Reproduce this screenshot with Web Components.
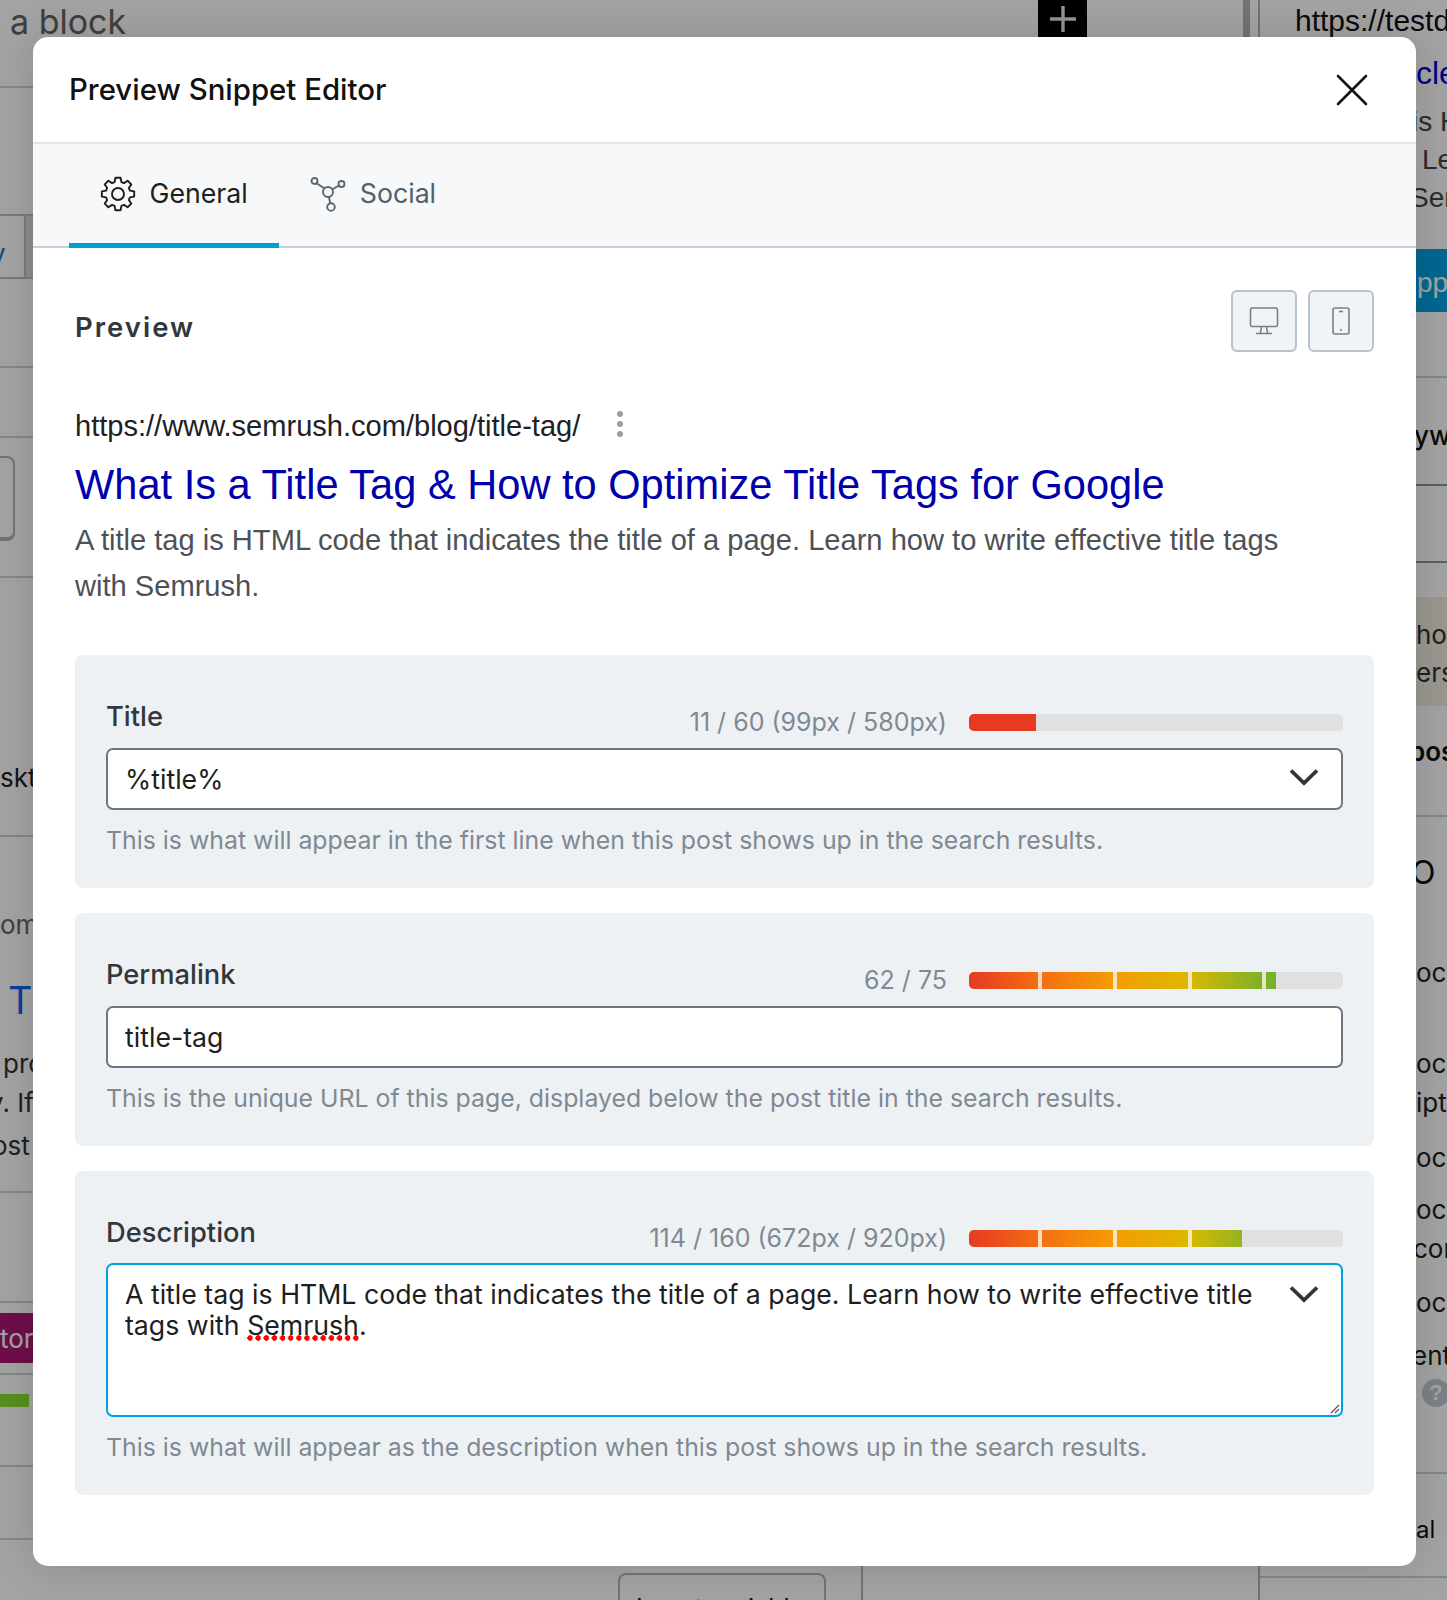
<!DOCTYPE html>
<html lang="en">
<head>
<meta charset="utf-8">
<title>Preview Snippet Editor</title>
<style>
  html, body { margin: 0; padding: 0; }
  body { font-family: Inter, "Noto Sans", sans-serif; }
</style>
</head>
<body>
<app-screen>
  <bg-col slot="left" style="--w:861px;--f:26px;--c:#1e1e1e;--ff:Inter,sans-serif">
    <bg-row style="--h:88px;--lh:44px;--fs:34px;--col:#636363;--pl:10px;--line:1">a block</bg-row>
    <bg-row style="--h:126px"></bg-row>
    <bg-tab>v</bg-tab>
    <bg-row style="--h:89px;--line:1"></bg-row>
    <bg-row style="--h:70px;--line:1"></bg-row>
    <bg-row style="--h:18px"></bg-row>
    <bg-box></bg-box>
    <bg-row style="--h:37px;--line:1"></bg-row>
    <bg-row style="--h:259px;--lh:400px;--line:1">skt</bg-row>
    <bg-row style="--h:120px;--lh:176px;--col:#666">om</bg-row>
    <bg-row style="--h:86px;--lh:86px;--fs:38px;--col:#1064f3;--pl:8px">T</bg-row>
    <bg-row style="--h:36px;--lh:42px;--pl:3px;--col:#333">pro</bg-row>
    <bg-row style="--h:37px;--lh:47px;--ti:-11px;--col:#333">y. If</bg-row>
    <bg-row style="--h:77px;--lh:60px;--ti:-8px;--col:#333;--line:1">ost</bg-row>
    <bg-row style="--h:110px;--line:1"></bg-row>
    <bg-row style="--h:10px"></bg-row>
    <bg-fill style="--h:50px;--w:33px;--bg:#ad1672;--lh:52px;--col:#fff">tor</bg-fill>
    <bg-row style="--h:12px;--line:1"></bg-row>
    <bg-row style="--h:19px"></bg-row>
    <bg-fill style="--h:13px;--w:29px;--bg:#86e22e"></bg-fill>
    <bg-row style="--h:60px;--line:1"></bg-row>
    <bg-row style="--h:73px;--line:1"></bg-row>
    <bg-row style="--h:33px"></bg-row>
    <bg-variable>Insert variable</bg-variable>
  </bg-col>
  <bg-mid slot="mid"></bg-mid>
  <bg-col slot="right" style="--w:187px;--ff:&quot;Liberation Sans&quot;,sans-serif">
    <bg-row style="--h:40px;--lh:41px;--pl:35px;--fs:30px;--col:#111">https://testd</bg-row>
    <bg-row style="--h:13px"></bg-row>
    <bg-row style="--h:40px;--lh:40px;--pl:156px;--fs:32px;--col:#0000cc">cle</bg-row>
    <bg-row style="--h:10px"></bg-row>
    <bg-row style="--h:38px;--lh:38px;--pl:152px;--fs:28px;--col:#444">is H</bg-row>
    <bg-row style="--h:38px;--lh:38px;--pl:162px;--fs:28px;--col:#444">Le</bg-row>
    <bg-row style="--h:38px;--lh:38px;--pl:150px;--fs:28px;--col:#444">Ser</bg-row>
    <bg-row style="--h:32px"></bg-row>
    <bg-fill style="--h:63px;--w:187px;--bg:#05a2e3;--lh:67px;--fs:28px;--col:#fff;--pl:157px">pp</bg-fill>
    <bg-row style="--h:66px;--line:1"></bg-row>
    <bg-row style="--h:108px;--lh:116px;--pl:154px;--col:#111;--ff2:Inter,sans-serif;--fw:500;--line:2">yw</bg-row>
    <bg-row style="--h:77px;--line:2"></bg-row>
    <bg-row style="--h:34px"></bg-row>
    <bg-fill style="--h:109px;--w:187px;--bg:#f2ede2;--lh:38px;--col:#2c3338;--pl:156px;--pt:19px;--ff2:Inter,sans-serif">hon<br>ers</bg-fill>
    <bg-row style="--h:111px;--lh:92px;--pl:152px;--ti:-3px;--col:#111;--fw:600;--ff2:Inter,sans-serif;--line:1">pos</bg-row>
    <bg-row style="--h:110px;--lh:112px;--pl:151px;--fs:32px;--col:#111;--ff2:Inter,sans-serif">O</bg-row>
    <bg-row style="--h:92px;--lh:92px;--pl:156px;--col:#222;--ff2:Inter,sans-serif">oc</bg-row>
    <bg-row style="--h:26px"></bg-row>
    <bg-row style="--h:38px;--lh:38px;--pl:156px;--col:#222;--ff2:Inter,sans-serif">oc</bg-row>
    <bg-row style="--h:38px;--lh:40px;--pl:156px;--col:#222;--ff2:Inter,sans-serif">ipt</bg-row>
    <bg-row style="--h:74px;--lh:74px;--pl:156px;--col:#222;--ff2:Inter,sans-serif">oc</bg-row>
    <bg-row style="--h:30px;--lh:30px;--pl:156px;--col:#222;--ff2:Inter,sans-serif">oc</bg-row>
    <bg-row style="--h:48px;--lh:48px;--pl:153px;--col:#222;--ff2:Inter,sans-serif">con</bg-row>
    <bg-row style="--h:60px;--lh:60px;--pl:156px;--col:#222;--ff2:Inter,sans-serif">oc</bg-row>
    <bg-row style="--h:46px;--lh:46px;--pl:152px;--col:#222;--ff2:Inter,sans-serif">ent</bg-row>
    <bg-help></bg-help>
    <bg-row style="--h:66px;--line:1"></bg-row>
    <bg-row style="--h:104px;--lh:112px;--pl:156px;--fs:24px;--col:#111;--ff2:Inter,sans-serif;--line:1">al</bg-row>
  </bg-col>

  <snippet-modal slot="modal" heading="Preview Snippet Editor">
    <modal-tabs slot="tabs">
      <tab-item active icon="gear">General</tab-item>
      <tab-item icon="social">Social</tab-item>
    </modal-tabs>

    <preview-head>Preview</preview-head>
    <serp-preview>
      <span slot="url">https://www.semrush.com/blog/title-tag/</span>
      <span slot="title">What Is a Title Tag &amp; How to Optimize Title Tags for Google</span>
      A title tag is HTML code that indicates the title of a page. Learn how to write effective title tags with Semrush.
    </serp-preview>

    <field-card label="Title" count="11 / 60 (99px / 580px)" fill="67" solid
      hint="This is what will appear in the first line when this post shows up in the search results." chevron>%title%</field-card>
    <field-card label="Permalink" count="62 / 75" fill="307"
      hint="This is the unique URL of this page, displayed below the post title in the search results.">title-tag</field-card>
    <field-card label="Description" count="114 / 160 (672px / 920px)" fill="273" multiline chevron
      hint="This is what will appear as the description when this post shows up in the search results.">A title tag is HTML code that indicates the title of a page. Learn how to write effective title tags with <spell-error>Semrush</spell-error>.</field-card>
  </snippet-modal>
</app-screen>

<script>
function define(name, html, extra) {
  const tpl = document.createElement('template');
  tpl.innerHTML = html;
  customElements.define(name, class extends HTMLElement {
    constructor() {
      super();
      this.attachShadow({ mode: 'open' }).appendChild(tpl.content.cloneNode(true));
    }
    connectedCallback() { if (extra) extra(this, this.shadowRoot); }
  });
}

define('app-screen', `
<style>
  :host { display:block; position:relative; width:1447px; height:1600px; overflow:hidden; background:#fff; }
  .page { display:flex; height:1600px; }
  .overlay { position:absolute; inset:0; background:rgba(0,0,0,.36); padding:37px 31px 34px 33px; box-sizing:border-box; display:flex; }
</style>
<div class="page"><slot name="left"></slot><slot name="mid"></slot><slot name="right"></slot></div>
<div class="overlay"><slot name="modal"></slot></div>`);

define('bg-col', `
<style>
  :host { display:block; width:var(--w); flex:none; height:1600px; font-family:var(--ff); overflow:hidden; box-sizing:border-box; }
</style><slot></slot>`);

define('bg-row', `
<style>
  :host { display:block; box-sizing:border-box; height:var(--h); line-height:var(--lh,var(--h));
    font-family:var(--ff2,inherit); font-size:var(--fs,26px); font-weight:var(--fw,400); color:var(--col,#222);
    padding-left:var(--pl,0); text-indent:var(--ti,0); white-space:nowrap; position:relative; }
  .l { position:absolute; left:0; right:0; bottom:0; height:2px; background:#cfd3d6; }
</style><slot></slot><div class="l" part="line"></div>`, (el, root) => {
  if (!el.style.getPropertyValue('--line')) root.querySelector('.l').remove();
  else if (el.style.getPropertyValue('--line').trim() === '2') root.querySelector('.l').style.background = '#8b95a0';
});

define('bg-fill', `
<style>
  :host { display:block; box-sizing:border-box; height:var(--h); width:var(--w); background:var(--bg);
    line-height:var(--lh,normal); color:var(--col,#fff); font-size:var(--fs,26px); font-family:var(--ff2,inherit);
    padding-left:var(--pl,0); padding-top:var(--pt,0); white-space:nowrap; overflow:hidden; }
</style><slot></slot>`);

define('bg-tab', `
<style>
  :host { display:flex; box-sizing:border-box; height:65px; border-top:2px solid #bcc0c3; border-bottom:2px solid #bcc0c3; }
  .a { width:26px; box-sizing:border-box; border-right:2px solid #bcc0c3; overflow:hidden; color:#0a7fc0; font-size:26px; line-height:75px; }
  .a span { display:block; margin-left:-9px; }
  .b { width:7px; background:#dcdcdc; }
</style><div class="a"><span><slot></slot></span></div><div class="b"></div>`);

define('bg-box', `
<style>
  :host { display:block; box-sizing:border-box; height:85px; width:15px; border:2px solid #b4b4b4; border-left:none; border-bottom-width:4px; border-radius:0 8px 8px 0; }
</style>`);

define('bg-variable', `
<style>
  :host { display:block; box-sizing:border-box; margin-left:618px; width:208px; height:60px; border:2px solid #b6b6b6; border-bottom:none; border-radius:8px 8px 0 0;
    padding-left:16px; font:25px/66px Inter,sans-serif; color:#111; white-space:nowrap; }
</style><slot></slot>`);

define('bg-mid', `
<style>
  :host { display:flex; flex-direction:column; flex:none; width:399px; height:1600px; box-sizing:border-box; border-right:2px solid #b4b4b4; }
  .top { display:flex; height:37px; }
  .plus { width:49px; height:37px; margin-left:177px; background:#000; display:flex; align-items:center; justify-content:center; }
  .band { width:7px; height:37px; margin-left:auto; margin-right:8px; background:#b4b4b4; }
  .low { margin-top:auto; height:60px; border-left:2px solid #b4b4b4; }
</style>
<div class="top"><div class="plus"><svg width="28" height="28" viewBox="0 0 28 28"><path d="M14 1v26M1 14h26" stroke="#e9e9e9" stroke-width="3.4" fill="none"/></svg></div>
<div class="band"></div></div><div class="low"></div>`);

define('bg-help', `
<style>
  :host { display:block; height:29px; box-sizing:border-box; padding-left:162px; }
  .c { width:28px; height:28px; border-radius:50%; background:#c2cad3; color:#fff; font:700 22px/28px "Liberation Sans",sans-serif; text-align:center; }
</style><div class="c">?</div>`);

define('snippet-modal', `
<style>
  :host { display:flex; flex-direction:column; flex:1; min-width:0; background:#fff; border-radius:15px; overflow:hidden; box-shadow:0 0 44px rgba(0,0,0,.14); color:#1e1e1e; }
  header { height:105px; display:flex; align-items:center; justify-content:space-between; padding:0 48px 0 36px; box-sizing:content-box; border-bottom:2px solid #e2e6ea; }
  h1 { margin:0; font:500 29.400px/1 Inter,sans-serif; color:#111; }
  .body { padding:0 42px; }
  svg { display:block; }
</style>
<header><h1 id="t"></h1>
  <svg width="32" height="32" viewBox="0 0 32 32"><path d="M2 2l28 28M30 2L2 30" stroke="#111" stroke-width="2.6" stroke-linecap="round" fill="none"/></svg>
</header>
<slot name="tabs"></slot>
<div class="body"><slot></slot></div>`, (el, root) => { root.getElementById('t').textContent = el.getAttribute('heading'); });

define('modal-tabs', `
<style>
  :host { display:flex; height:102px; box-sizing:content-box; padding-left:36px; background:#f7f8fa; border-bottom:2px solid #c6cfd9; }
</style><slot></slot>`);

function gearPath() {
  const pts = [];
  for (let i = 0; i < 8; i++) {
    const a = i * 45 - 90;
    [[12.4,-16],[16.4,-9],[16.4,9],[12.4,16]].forEach(([r, d]) => {
      const t = (a + d) * Math.PI / 180;
      pts.push((18 + r * Math.cos(t)).toFixed(2) + ' ' + (18 + r * Math.sin(t)).toFixed(2));
    });
  }
  return 'M' + pts.join('L') + 'Z';
}

define('tab-item', `
<style>
  :host { display:flex; align-items:center; gap:14px; box-sizing:border-box; height:104px; margin-bottom:-2px; font:400 26.700px/1 Inter,sans-serif; color:#51606d; padding:0 31.500px 5px 30.500px; }
  :host([active]) { color:#1e1e1e; border-bottom:5px solid #00a0d2; padding-bottom:0; }
  svg { display:block; flex:none; }
</style><span id="i"></span><slot></slot>`, (el, root) => {
  const i = root.getElementById('i');
  i.style.display = 'block';
  if (el.getAttribute('icon') === 'gear') {
    i.innerHTML = '<svg width="36" height="36" viewBox="0 0 36 36" fill="none" stroke="#1e1e1e" stroke-width="1.9" stroke-linejoin="round"><path d="' + gearPath() + '"/><circle cx="18" cy="18" r="6"/></svg>';
  } else {
    i.innerHTML = '<svg width="36" height="36" viewBox="0 0 36 36" fill="none" stroke="#5b6670" stroke-width="1.9"><circle cx="4.5" cy="5" r="3"/><circle cx="31.5" cy="8" r="3"/><circle cx="18" cy="16" r="5"/><circle cx="21" cy="31" r="3.8"/><path d="M7 7.5l7.5 5M29 9.5l-7 4M19 21l1.200 6.200"/></svg>';
  }
});

define('preview-head', `
<style>
  :host { display:flex; align-items:center; justify-content:space-between; padding-top:42px; }
  .t { font:600 27.500px/1 Inter,sans-serif; letter-spacing:2px; color:#32373c; padding-top:13px; }
  .btns { display:flex; gap:11px; }
  .b { width:66px; height:62px; box-sizing:border-box; background:#f1f4f6; border:2px solid #b8c3cf; border-radius:6px; display:flex; align-items:center; justify-content:center; }
  svg { display:block; }
</style>
<div class="t"><slot></slot></div>
<div class="btns">
  <div class="b"><svg width="30" height="28" viewBox="0 0 30 28" fill="none" stroke="#777f8c" stroke-width="1.6" stroke-linejoin="round"><rect x="1.500" y="1" width="27" height="18.500" rx="1.500"/><path d="M12.500 19.500l-1 6.500M17.500 19.500l1 6.500M7 26.500h16"/></svg></div>
  <div class="b"><svg width="18" height="28" viewBox="0 0 18 28" fill="none" stroke="#777f8c" stroke-width="1.600"><rect x="1" y="1" width="16" height="26" rx="2"/><path d="M7 4.500h4" stroke-width="1.600"/><circle cx="9" cy="23" r="1.100" fill="#777f8c" stroke="none"/></svg></div>
</div>`);

define('serp-preview', `
<style>
  :host { display:block; font-family:"Liberation Sans",Arial,sans-serif; margin-bottom:46px; }
  .u { display:flex; align-items:center; gap:37px; margin-top:54px; font-size:29.050px; line-height:40px; color:#202124; }
  .dots { display:flex; flex-direction:column; gap:4px; margin-top:-4px; }
  .dots i { display:block; width:6px; height:6px; border-radius:50%; background:#9aa0a6; }
  .t { margin-top:14px; font-size:41.600px; line-height:50px; color:#0000aa; white-space:nowrap; }
  .d { margin-top:7px; font-size:29.100px; line-height:46px; color:#4d5156; max-width:1240px; }
</style>
<div class="u"><slot name="url"></slot><div class="dots"><i></i><i></i><i></i></div></div>
<div class="t"><slot name="title"></slot></div>
<div class="d"><slot></slot></div>`);

define('progress-bar', `
<style>
  :host { display:block; position:relative; width:374px; height:17px; background:#e0e0e0; border-radius:5px; overflow:hidden; flex:none; }
  .f { height:17px; background:linear-gradient(90deg,#e63a21 0,#f36d14 69px,#f59b05 144px,#dcb800 219px,#7cb12a 293px,#6cae2f 374px); background-size:374px 17px; background-repeat:no-repeat; }
  .s { position:absolute; top:0; bottom:0; width:4px; background:rgba(247,240,225,.85); }
</style>
<div class="f" id="f"></div>`, (el, root) => {
  const f = root.getElementById('f');
  const w = +el.getAttribute('fill');
  f.style.width = w + 'px';
  if (el.hasAttribute('solid')) f.style.background = '#e63a21';
  [69, 144, 219, 293].forEach(x => {
    if (x < w) { const s = document.createElement('div'); s.className = 's'; s.style.left = x + 'px'; root.appendChild(s); }
  });
});

define('field-card', `
<style>
  :host { display:block; background:#eef1f4; border-radius:8px; padding:49px 31px 32px; margin-bottom:25px; }
  .top { display:flex; align-items:center; height:37px; margin-bottom:7px; }
  :host([multiline]) .top { margin-bottom:6px; }
  .lab { font:500 27.300px/1 Inter,sans-serif; color:#32373c; padding-bottom:11px; margin-right:auto; }
  .cnt { font:400 25px/1 Inter,sans-serif; color:#7e8993; margin-right:22px; white-space:nowrap; }
  .in { position:relative; box-sizing:border-box; height:62px; background:#fff; border:2px solid #6c7781; border-radius:7px; padding:0 17px; font:400 26.700px/58px Inter,sans-serif; color:#1e1e1e; }
  :host([multiline]) .in { height:154px; border-color:#00a0e4; line-height:31px; padding:14px 60px 0 17px; }
  .chev { position:absolute; right:22px; top:18px; }
  :host([multiline]) .chev { top:20px; }
  .rz { position:absolute; right:1px; bottom:1px; }
  .hint { margin-top:14px; font:400 24.850px/32px Inter,sans-serif; color:#7e8993; white-space:nowrap; }
  svg { display:block; }
</style>
<div class="top" id="top"><div class="lab" id="l"></div><div class="cnt" id="c"></div></div>
<div class="in" id="in"><slot></slot></div>
<div class="hint" id="h"></div>`, (el, root) => {
  root.getElementById('l').textContent = el.getAttribute('label');
  root.getElementById('c').textContent = el.getAttribute('count');
  root.getElementById('h').textContent = el.getAttribute('hint');
  const p = document.createElement('progress-bar');
  p.setAttribute('fill', el.getAttribute('fill'));
  if (el.hasAttribute('solid')) p.setAttribute('solid', '');
  root.getElementById('top').appendChild(p);
  const box = root.getElementById('in');
  if (el.hasAttribute('chevron')) {
    box.insertAdjacentHTML('beforeend', '<svg class="chev" width="30" height="18" viewBox="0 0 30 18" fill="none" stroke="#32373c" stroke-width="3.800"><path d="M2 2.500l13 12.500 13-12.500"/></svg>');
  }
  if (el.hasAttribute('multiline')) {
    box.insertAdjacentHTML('beforeend', '<svg class="rz" width="10" height="10" viewBox="0 0 10 10" stroke="#555" stroke-width="1.200"><path d="M1 9l8-8M5 9l4-4"/></svg>');
  }
});

define('spell-error', `
<style>
  :host { display:inline; background:radial-gradient(circle at 3px 3px,#f00 2.500px,transparent 3px) 0 100%/8.150px 6px repeat-x; }
</style><slot></slot>`);
</script>
</body>
</html>
